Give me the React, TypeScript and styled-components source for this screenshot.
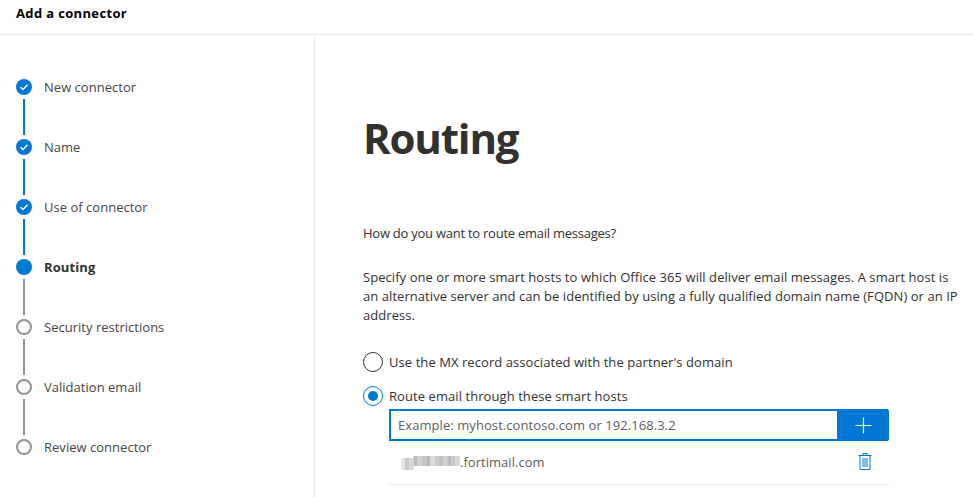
import React from "react";
import styled, { createGlobalStyle } from "styled-components";

const Global = createGlobalStyle`
  html, body { margin: 0; padding: 0; background: #fff; overflow: hidden; }
  body { font-family: "Open Sans", "Noto Sans", "Liberation Sans", sans-serif; color: #323130; }
`;
const Page = styled.div`width: 973px; height: 497px; overflow: hidden; display: flex; flex-direction: column;`;
const Header = styled.header`
  height: 34px; flex: none; border-bottom: 1px solid #edebe9; padding-left: 16px;
  display: flex; align-items: center; box-sizing: content-box;
`;
const Title = styled.h2`margin: 0 0 9px; font-size: 13px; font-weight: 700; color: #000; letter-spacing: 0.35px; line-height: 16px;`;
const Body = styled.div`flex: 1; display: flex; min-height: 0;`;
const Side = styled.nav`
  flex: none; box-sizing: border-box; width: 315px; border-right: 1px solid #edebe9;
  padding: 44px 0 0 16px;
  display: flex; flex-direction: column;
`;
const Step = styled.div`display: flex; height: 60px; flex: none; gap: 12px;`;
const Rail = styled.div`width: 16px; flex: none; display: flex; flex-direction: column; align-items: center;`;
const Dot = styled.div<{ $state: string }>`
  width: 16px; height: 16px; border-radius: 50%; box-sizing: border-box; flex: none;
  display: flex; align-items: center; justify-content: center;
  background: ${p => (p.$state === "todo" ? "#fff" : "#0078d4")};
  border: ${p => (p.$state === "todo" ? "2px solid #949494" : "none")};
`;
const Link = styled.div<{ $on: boolean }>`
  width: 2px; height: 36px; margin-top: 4px; background: ${p => (p.$on ? "#0078d4" : "#949494")};
`;
const StepLabel = styled.span<{ $active: boolean }>`
  font-size: 13px; line-height: 16px; letter-spacing: ${p => (p.$active ? "0.1px" : "0.02px")};
  font-weight: ${p => (p.$active ? 700 : 400)};
  color: ${p => (p.$active ? "#323130" : "#484644")};
`;
const Main = styled.main`flex: 1; min-width: 0; padding: 0 0 0 48px; display: flex; flex-direction: column;`;
const Heading = styled.h1`margin: 73px 0 0; font-size: 42px; line-height: 60px; font-weight: 700; color: #323130; letter-spacing: -1.2px;`;
const Question = styled.p`margin: 56px 0 0; font-size: 13px; line-height: 18px; letter-spacing: -0.25px; color: #323130;`;
const Para = styled.p`margin: 26px 0 0; font-size: 13px; line-height: 19px; letter-spacing: 0.06px; color: #323130; width: 600px;`;
const Option = styled.div`display: flex; align-items: center; gap: 6px; height: 20px; font-size: 13px; letter-spacing: 0.07px; color: #323130;`;
const Options = styled.div`margin-top: 27px; display: flex; flex-direction: column; gap: 14px;`;
const Radio = styled.span<{ $checked?: boolean }>`
  width: 20px; height: 20px; border-radius: 50%; box-sizing: border-box; flex: none;
  border: 1px solid ${p => (p.$checked ? "#0078d4" : "#323130")};
  display: flex; align-items: center; justify-content: center;
  &::after {
    content: ""; width: 10px; height: 10px; border-radius: 50%;
    background: ${p => (p.$checked ? "#0078d4" : "transparent")};
  }
`;
const Hosts = styled.div`margin: 3px 0 0 26px; width: 500px;`;
const InputRow = styled.div`display: flex; height: 32px;`;
const Input = styled.input`
  width: 448px; height: 32px; box-sizing: border-box; border: 2px solid #0078d4; border-right: 0; border-radius: 0; outline: none;
  padding: 0 7px; font: 13px "Open Sans", sans-serif; letter-spacing: 0.07px; color: #323130;
  &::placeholder { color: #605e5c; opacity: 1; }
`;
const AddButton = styled.button`
  width: 52px; height: 32px; border: 0; padding: 0; border-radius: 0 2px 2px 0; background: #0078d4;
  display: flex; align-items: center; justify-content: center;
`;
const HostRow = styled.div`
  height: 44px; width: 500px; box-sizing: border-box; border-bottom: 1px solid #edebe9;
  display: flex; align-items: center; padding: 0 17px 2px 11px; justify-content: space-between;
`;
const HostName = styled.span`display: flex; align-items: center; font-size: 13px; letter-spacing: 0.03px; color: #605e5c;`;
const Trash = styled.button`border: 0; background: none; padding: 0; display: flex;`;

const Check = () => (
  <svg width="10" height="10" viewBox="0 0 10 10" fill="none">
    <path d="M1.5 5.2 L4 7.5 L8.5 2.8" stroke="#fff" strokeWidth="1.4" />
  </svg>
);

const Mosaic = () => {
  const cols = ["#e4e4e4","#c8c8c8","#d6d6d6","#bdbdbd","#d0d0d0","#c4c4c4","#b8b8b8","#dadada","#cacaca","#c0c0c0","#d2d2d2","#bbbbbb","#c6c6c6","#d8d8d8"];
  return (
    <svg width="60" height="17" viewBox="0 0 60 17" aria-hidden="true">
      {cols.map((c, i) => <rect key={i} x={i * 4.2 + 1} y={i < 3 ? 5 : 3} width="4.2" height={i < 3 ? 12 : 10} fill={c} />)}
    </svg>
  );
};

const steps = [
  { label: "New connector", state: "done" },
  { label: "Name", state: "done" },
  { label: "Use of connector", state: "done" },
  { label: "Routing", state: "active" },
  { label: "Security restrictions", state: "todo" },
  { label: "Validation email", state: "todo" },
  { label: "Review connector", state: "todo" },
];

export default function App() {
  return (
    <Page>
      <Global />
      <Header><Title>Add a connector</Title></Header>
      <Body>
        <Side>
          {steps.map((s, i) => (
            <Step key={s.label}>
              <Rail>
                <Dot $state={s.state}>{s.state === "done" && <Check />}</Dot>
                {i < steps.length - 1 && <Link $on={s.state === "done"} />}
              </Rail>
              <StepLabel $active={s.state === "active"}>{s.label}</StepLabel>
            </Step>
          ))}
        </Side>
        <Main>
          <Heading>Routing</Heading>
          <Question>How do you want to route email messages?</Question>
          <Para>Specify one or more smart hosts to which Office 365 will deliver email messages. A smart host is an alternative server and can be identified by using a fully qualified domain name (FQDN) or an IP address.</Para>
          <Options>
            <Option><Radio />Use the MX record associated with the partner's domain</Option>
            <Option><Radio $checked />Route email through these smart hosts</Option>
          </Options>
          <Hosts>
            <InputRow>
              <Input placeholder="Example: myhost.contoso.com or 192.168.3.2" />
              <AddButton aria-label="Add">
                <svg width="17" height="17" viewBox="0 0 17 17"><path d="M8.5 0.5V16.5M0.5 8.5H16.5" stroke="#fff" strokeWidth="1.2" /></svg>
              </AddButton>
            </InputRow>
            <HostRow>
              <HostName><Mosaic />.fortimail.com</HostName>
              <Trash aria-label="Delete">
                <svg width="14" height="17" viewBox="0 0 14 17" fill="none" stroke="#0078d4" strokeWidth="1">
                  <path d="M0.5 2.5H13.5M5 2.5V0.5H9V2.5M2 2.5V16.5H12V2.5M5 5V14M7 5V14M9 5V14" />
                </svg>
              </Trash>
            </HostRow>
          </Hosts>
        </Main>
      </Body>
    </Page>
  );
}
